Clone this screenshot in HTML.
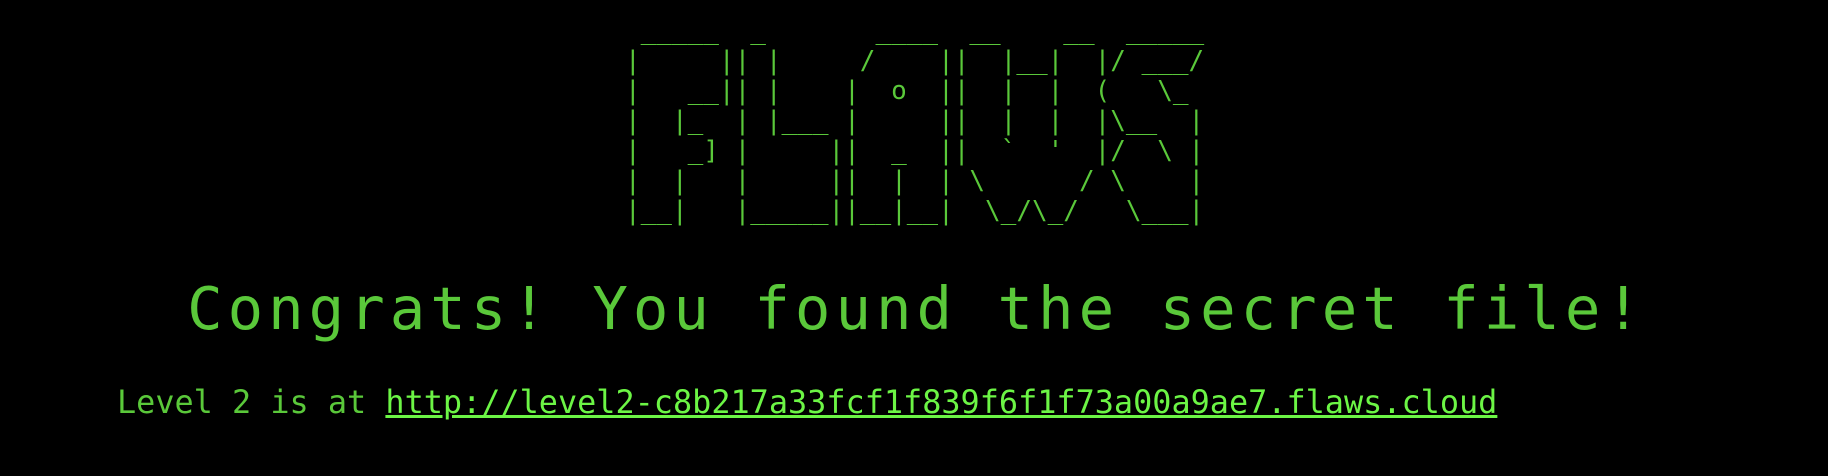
<!DOCTYPE html>
<html><head><meta charset="utf-8"><style>
html,body{margin:0;padding:0;background:#000;width:1828px;height:476px;overflow:hidden;}
body{position:relative;font-family:"DejaVu Sans Mono","Liberation Mono",monospace;}
pre{position:absolute;left:625px;top:16px;margin:0;font-family:"DejaVu Sans Mono","Liberation Mono",monospace;font-size:26px;line-height:30px;color:#5ac83a;}
.t{position:absolute;left:0;width:1828px;top:279px;text-align:center;font-size:59px;line-height:59px;letter-spacing:5px;padding-left:5px;box-sizing:border-box;color:#5ac83a;white-space:nowrap;}
.l{position:absolute;left:117px;top:386px;font-size:31.85px;line-height:32px;color:#5ac83a;white-space:nowrap;}
.l a{color:#6cf545;text-decoration:underline;}
</style></head><body>
<pre> _____  _       ____  __    __  _____
|     || |     /    ||  |__|  |/ ___/
|   __|| |    |  o  ||  |  |  (   \_
|  |_  | |___ |     ||  |  |  |\__  |
|   _] |     ||  _  ||  `  '  |/  \ |
|  |   |     ||  |  | \      / \    |
|__|   |_____||__|__|  \_/\_/   \___|</pre>
<div class="t">Congrats! You found the secret file!</div>
<div class="l">Level 2 is at <a>http://level2-c8b217a33fcf1f839f6f1f73a00a9ae7.flaws.cloud</a></div>
</body></html>
